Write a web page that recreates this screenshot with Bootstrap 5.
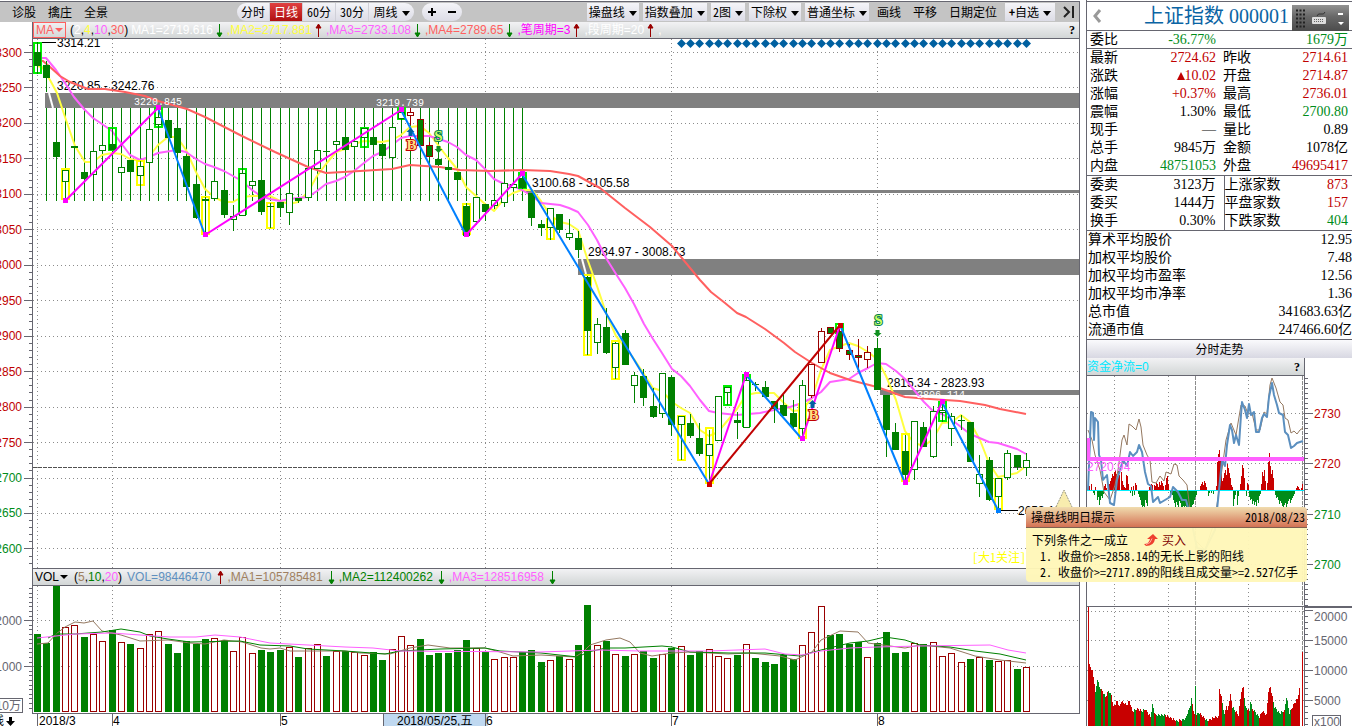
<!DOCTYPE html>
<html lang="zh-CN">
<head>
<meta charset="utf-8">
<meta name="viewport" content="width=device-width, initial-scale=1">
<title>上证指数 000001</title>
<link href="https://cdn.jsdelivr.net/npm/bootstrap@5.3.0/dist/css/bootstrap.min.css" rel="stylesheet">
<script src="https://cdn.jsdelivr.net/npm/bootstrap@5.3.0/dist/js/bootstrap.bundle.min.js"></script>
<style>
:root { --line:#666670; --up:#c00000; --down:#008c1a; }
body { font:12px/16px "Liberation Sans","Noto Sans CJK SC",sans-serif; color:#000; background:#fff; overflow:hidden; }
svg { display:block; width:100%; height:auto; }
svg text { font-size:12px; }
.main-pane { padding-right:6px; min-width:0; }
.toolbar { height:21px; background:#c4c4c4; border-top:1px solid var(--line); border-right:1px solid var(--line); margin-top:1px; font-family:"Noto Sans CJK SC",sans-serif; }
.toolbar a { color:#000; text-decoration:none; }
.toolbar .btn { font:inherit; color:#000; border:0; border-radius:0; padding:0 2px; height:18px; line-height:18px; white-space:nowrap; background:linear-gradient(#f4f4f8,#dcdce6); transition:none; }
.toolbar .dropdown-toggle::after { border-top:5px solid; border-right:4px solid transparent; border-left:4px solid transparent; margin-left:4px; vertical-align:1px; }
.half { font-family:"Noto Sans CJK SC",sans-serif; font-feature-settings:"hwid"; }
.pill { height:18px; border-radius:9px; overflow:hidden; background:linear-gradient(#f4f4f8,#dcdce6); }
.toolbar .pill .btn { background:none; border-right:1px solid #d0d0d8; width:33px; padding:0; }
.toolbar .pill .btn:last-child { border-right:0; }
.toolbar .pill .btn.wide { width:45px; }
.toolbar .pill .btn.step { width:20px; border:0; line-height:0; }
.pill .btn.step svg { width:10px; margin:auto; }
.toolbar .pill .btn.current { background:linear-gradient(#e04040,#b01010); color:#fff; }
.period { margin-left:129px; }
.indicator { height:17px; margin-left:32px; padding-right:4px; border:1px solid var(--line); border-width:0 1px 1px; background:linear-gradient(#f2f2f4,#d2d6d6); white-space:nowrap; overflow:hidden; }
.indicator.boxed { height:18px; border-top-width:1px; }
.indicator .series { margin-right:3px; }
.indicator.boxed .series { margin-right:5px; }
.tag-btn { font:inherit; background:none; border:0; padding:0 2px; line-height:14px; }
.tag-btn::after { content:""; display:inline-block; border:4px solid transparent; border-top:4px solid; border-bottom:0; margin-left:1px; vertical-align:2px; }
.tag-btn.red { color:#ff6060; border:1px solid #ff6060; padding:0 2px; }
.arrow { width:7px; height:15px; margin-right:4px; flex:none; }
.ask { font:bold 12px/14px "Liberation Serif",serif; background:none; border:0; padding:0; }
.side-pane { width:266px; flex:none; border-left:1px solid var(--line); position:relative; padding-top:1px; }
.quote-title { height:29px; border-top:1px solid var(--line); font:20px/28px "Liberation Serif","Noto Sans CJK SC",serif; color:#0a64a4; padding:0 63px 0 5px; }
.quote-title .btn { padding:0; border:0; width:11px; line-height:0; }
.quote { table-layout:fixed; width:100%; margin:0; font:14px/18px "Liberation Serif","Noto Sans CJK SC",serif; border-top:1px solid var(--line); --bs-table-bg:transparent; color:#000; }
.quote th, .quote td { padding:0 3px; border:0; font-weight:400; white-space:nowrap; height:18px; line-height:18px; color:#000; }
.quote td { text-align:right; padding-right:4px; }
.quote .up { color:var(--up); } .quote .down { color:var(--down); }
.quote.brief th, .quote.brief td { height:17px; line-height:17px; }
.quote.split th + td { padding-right:8px; }
.quote.split th + td:last-child { padding-right:4px; }
.quote.split td + th { border-left:1px solid var(--line); padding-left:0; }
.quote.wide-rows th { padding-left:1px; } .quote.wide-rows td { padding-right:0; }
.trend-title { height:19px; line-height:18px; border-top:1px solid var(--line); background:linear-gradient(#fafafc,#d8d8e2); text-align:center; font-family:"Noto Sans CJK SC",sans-serif; }
.flow { height:18px; width:218px; border:1px solid var(--line); border-width:0 1px 1px 0; background:linear-gradient(#f2f2f4,#d2d6d6); color:#00e8ff; padding-right:4px; }
.keypad { position:absolute; top:5px; right:3px; width:57px; height:26px; }
.hint { position:absolute; z-index:5; top:489px; right:45px; width:281px; }
.hint .tip-mark { width:18px; height:18px; margin-left:29px; }
.hint-head { height:21px; line-height:20px; padding:0 2px 0 5px; background:linear-gradient(#f0dcae,#d47254); border-bottom:1px solid #806050; border-radius:4px 4px 0 0; }
.hint-body { background:rgba(255,247,184,.96); border-radius:0 0 4px 4px; padding:4px 4px 0 6px; height:54px; }
.hint-body ol { margin:0; padding-left:26px; }
</style>
</head>
<body>
<div class="d-flex align-items-start">
  <main class="main-pane flex-grow-1">
    <nav class="toolbar d-flex align-items-center">
      <div class="d-flex gap-2">
        <a class="ms-2 ps-1" href="#">诊股</a><a class="ms-1" href="#">擒庄</a><a class="ms-1" href="#">全景</a>
      </div>
      <div class="pill period d-flex half">
        <button class="btn">分时</button><button class="btn current">日线</button><button class="btn">60分</button><button class="btn">30分</button><button class="btn wide dropdown-toggle">周线</button>
      </div>
      <div class="pill d-flex ms-2"><button class="btn step" aria-label="放大"><svg viewBox="0 0 10 10"><path d="M1 5h8M5 1v8" stroke="#000" stroke-width="2"/></svg></button><button class="btn step" aria-label="缩小"><svg viewBox="0 0 10 10"><path d="M1 5h8" stroke="#000" stroke-width="2"/></svg></button></div>
      <div class="d-flex align-items-center gap-1 ms-auto half">
        <button class="btn dropdown-toggle">操盘线</button>
        <button class="btn dropdown-toggle">指数叠加</button>
        <button class="btn dropdown-toggle">2图</button>
        <button class="btn dropdown-toggle">下除权</button>
        <button class="btn dropdown-toggle">普通坐标</button>
        <a class="px-1" href="#">画线</a><a class="px-1" href="#">平移</a><a class="px-1" href="#">日期定位</a>
        <button class="btn dropdown-toggle px-1"><b>+</b>自选</button>
        <a class="px-1" href="#" aria-label="展开"><svg viewBox="0 0 12 12" style="width:12px"><path d="M1 1l5 5-5 5M10 0v12" fill="none" stroke="#222" stroke-width="2"/></svg></a>
      </div>
    </nav>
    <div class="indicator d-flex align-items-center" id="maBar">
      <button class="tag-btn red me-1">MA</button>
      <span class="series">(<span style="color:#fff">2</span>,<span style="color:#ffff40">4</span>,<span style="color:#ff60ff">10</span>,<span style="color:#ff6060">30</span>)</span>
    </div>
    <svg id="price" viewBox="0 39 1080 529" role="img" aria-label="日线"></svg>
    <div class="indicator boxed d-flex align-items-center" id="volBar">
      <button class="tag-btn me-1">VOL</button>
      <span class="series">(<span style="color:#a08060">5</span>,<span style="color:#008000">10</span>,<span style="color:#ff60ff">20</span>)</span>
    </div>
    <svg id="volume" viewBox="0 586 1080 140" role="img" aria-label="成交量"></svg>
  </main>

  <aside class="side-pane">
    <div class="quote-title d-flex align-items-center justify-content-between">
      <button class="btn" aria-label="返回"><svg viewBox="0 0 11 14"><path d="M8 1L3 7l5 6" fill="none" stroke="#999" stroke-width="3"/></svg></button>
      <span>上证指数 000001</span>
    </div>
    <div class="keypad"><svg viewBox="0 0 57 26"><defs><linearGradient id="kp" x2="0" y2="1"><stop offset="0" stop-color="#929292"/><stop offset=".45" stop-color="#686868"/><stop offset="1" stop-color="#4c4c4c"/></linearGradient></defs><rect width="57" height="26" fill="url(#kp)"/><path d="M4 5.500h9M4 9.500h9M4 13.500h9M4 17.500h9M4 21.500h9" stroke="#222" stroke-dasharray="2 1.500" stroke-width="2"/><rect x="20" y="12" width="14" height="7" rx="1" fill="#ddd"/><path d="M22 14.500h10M22 16.500h10" stroke="#666" stroke-dasharray="1 1"/><path d="M25 11q1-3 4-2t4-2" fill="none" stroke="#333"/><path d="M46 8h5v2h-5zM46 17h6l-3 3z" fill="#fff"/></svg></div>
    <table class="table table-borderless quote brief">
      <tr><th style="width:48px">委比</th><td style="width:85px" class="down">-36.77%</td><td class="down">1679万</td></tr>
    </table>
    <table class="table table-borderless quote">
      <colgroup><col style="width:40px"><col style="width:93px"><col style="width:66px"><col></colgroup>
      <tbody id="q1"></tbody>
    </table>
    <table class="table table-borderless quote split">
      <colgroup><col style="width:40px"><col style="width:97px"><col style="width:66px"><col></colgroup>
      <tbody id="q2"></tbody>
    </table>
    <table class="table table-borderless quote wide-rows">
      <colgroup><col style="width:110px"><col></colgroup>
      <tbody id="q3"></tbody>
    </table>
    <div class="trend-title">分时走势</div>
    <div class="flow d-flex justify-content-between align-items-center"><span>资金净流=0</span><button class="ask">?</button></div>
    <svg id="intraday" viewBox="1087 376 265 350" role="img" aria-label="分时走势"></svg>
    <section class="hint half">
      <svg class="tip-mark" viewBox="0 0 18 18"><path d="M1 18L9 1l8 17" fill="#f8ecae" stroke="#998" stroke-dasharray="2 1"/></svg>
      <div class="hint-head d-flex justify-content-between"><span>操盘线明日提示</span><span>2018/08/23</span></div>
      <div class="hint-body">
        <div class="d-flex align-items-center">下列条件之一成立
          <svg viewBox="0 0 14 14" style="width:14px" class="ms-3 me-1"><path d="M0 11q5 0 6-5H3l6-5 5 5h-3q-1 7-9 7z" fill="#ee4030"/><path d="M2 11.500q5-1 6-6" fill="none" stroke="#ffb0a0"/></svg>
          <span style="color:#800000">买入</span></div>
        <ol><li>收盘价&gt;=2858.14的无长上影的阳线</li><li>收盘价&gt;=2717.89的阳线且成交量&gt;=2.527亿手</li></ol>
      </div>
    </section>
  </aside>
</div>

<script>
const GREEN = '#008000', RED = '#990000', LIME = '#00f000', YEL = '#ffff00', LINE = '#666670', GRID = '#8c8c8c';
const el = id => document.getElementById(id);
const X = i => Math.round(37 + 9.33 * i);
const rect = (x, y, w, h, fill, extra = '') => `<rect x="${x}" y="${y}" width="${w}" height="${h}" fill="${fill}" shape-rendering="crispEdges" ${extra}/>`;
const seg = (x1, y1, x2, y2, c, extra = '') => `<path d="M${x1} ${y1}L${x2} ${y2}" stroke="${c}" fill="none" ${extra}/>`;
const hair = (x1, y1, x2, y2, c, dash) => seg(x1, y1, x2, y2, c, 'shape-rendering="crispEdges"' + (dash ? ` stroke-dasharray="${dash}"` : ''));
const poly = (s, c, w) => `<polyline points="${s}" fill="none" stroke="${c}" stroke-width="${w}" stroke-linejoin="round"/>`;
const txt = (x, y, s, c = '#000', extra = '') => `<text x="${x}" y="${y}" fill="${c}" ${extra}>${s}</text>`;
const months = [[0, '2018/3'], [8, '4'], [26, '5'], [48, '6'], [68, '7'], [90, '8']];

/* indicator bars */
const arrow = d => `<svg class="arrow" viewBox="0 0 7 15"><path d="${d > 0 ? 'M3.500 14V2M1 5l2.500-4L6 5z' : 'M3.500 1v12M1 10l2.500 4L6 10z'}" stroke="${d > 0 ? '#900' : GREEN}" fill="${d > 0 ? '#900' : GREEN}"/></svg>`;
const series = (bar, list) => el(bar).insertAdjacentHTML('beforeend', list.map(([t, c, d]) => `<span class="series" style="color:${c}">${t}</span>${d ? arrow(d) : ''}`).join(''));
series('maBar', [['MA1=2719.616', '#fff', -1], [',MA2=2717.881', '#ffff40', 1], [',MA3=2733.108', '#ff60ff', -1], [',MA4=2789.65', '#ff6060', -1], [',笔周期=3', '#f0f', 1], [',段周期=20', '#fff', 1], [',', '#fff', 0]]);
el('maBar').insertAdjacentHTML('beforeend', '<button class="ask ms-auto">?</button>');
series('volBar', [['VOL=98446470', '#6090c0', 1], [',MA1=105785481', '#a08060', -1], [',MA2=112400262', GREEN, -1], [',MA3=128516958', '#ff60ff', -1]]);

/* daily candles: kind, body top, body bottom, wick top, wick bottom, optional box [colour, top, bottom]
   f filled, h hollow, r hollow red, b filled with red outline */
const candles = [
['f',52,66,42,74,'L',42,74],['f',65,78,61,92],['f',142,157],['h',170,181,170,200,'Y',168,200],['f',146,148],['f',172,179,172,181],['h',151,174],['h',145,150],['f',144,150,128,150,'L',127,151],['h',167,172],
['f',160,172],['h',166,175,161,186,'Y',160,186],['h',129,162],['h',117,124,108,128,'L',107,128],['f',120,138],['f',128,153],['f',156,187],['f',184,218,184,219],['f',199,201,197,235,'Y',196,235],['h',181,198],
['f',190,215,190,218],['h',216,219,205,231],['h',173,215,168,215,'L',168,215],['h',181,185],['f',180,212,180,215],['f',206,207,203,228,'Y',202,229],['f',202,208,202,217],['h',193,212,193,225],['f',198,201,198,203],['h',168,197],
['h',150,168],['f',151,152],['h',141,144],['f',137,150],['h',141,146],['h',128,137,128,148,'L',127,148],['f',137,145],['f',144,156],['h',127,157],['h',112,118,108,120,'L',107,120],
['r',112,115,108,125],['b',119,145],['b',145,156,142,156],['f',159,165],['f',167,170],['f',172,180],['f',206,236,203,236,'Y',203,235],['h',197,221,197,225],['f',204,212,204,221],['h',200,205,200,209],
['h',183,202,183,207],['h',184,187],['f',178,188,172,189,'L',172,189],['f',193,218,193,226],['f',224,228,220,236],['h',208,227,208,240,'Y',218,240],['f',214,230,214,233],['h',233,237,219,240],['f',238,250,231,258],['f',277,331,276,355,'Y',274,356],
['h',324,342,318,354],['f',327,353,308,354],['h',343,367,342,379,'Y',340,380],['f',333,365,330,365],['h',375,385,372,403],['f',376,398,369,406],['f',406,417,388,418],['h',373,413,373,418],['f',377,425,375,436],['h',416,424,416,460,'Y',415,461],
['f',423,436,414,438],['f',438,454,423,456],['h',444,455,430,482,'Y',427,484],['h',396,440],['h',387,392,387,405,'L',385,406],['f',420,423,412,439],['h',380,427,376,427,'L',374,427],['f',384,385,382,391],['f',387,397,381,398],['f',401,409,401,423],
['f',405,416,394,416],['f',413,427,400,430],['h',385,428,380,439,'Y',403,439],['r',364,395,364,398],['r',331,362,328,362],['b',327,333],['b',331,348,325,352,'L',323,334],['b',350,354,344,360],['b',355,357,339,370],['r',352,359,346,368],
['f',348,390,338,390],['f',395,430,395,457],['f',432,450,423,450],['f',451,475,435,482,'Y',433,482],['h',421,469,421,480],['f',427,447,422,447],['h',411,456,406,458],['h',410,412,402,422,'L',401,422],['h',416,428,413,446],['f',420,421,415,430],
['f',422,462],['h',474,483,455,497],['f',460,500,457,501],['h',478,496,478,510,'Y',478,510],['h',453,477,450,480],['f',455,467,455,470],['h',460,467,453,476]];

let p = '';
for (let k = 0; k < 15; k++) {
  const y = Math.round(52 + k * 35.46) + .5;
  p += hair(33, y, 1079, y, GRID, '1 3');
}
months.forEach(([i]) => p += hair(X(i) + .5, 39, X(i) + .5, 568, GRID, '1 3'));
[[45, 93, 15], [526, 190, 3], [578, 259, 16], [880, 390, 5]].forEach(([x, y, h]) => p += rect(x, y, 1080 - x, h, '#808080'));
p += seg(49, 93, 53, 108, '#fff', 'stroke-width="2"') + seg(582, 259, 586, 274, '#fff', 'stroke-width="2"');
for (let i = 1; i <= 52; i++) p += hair(X(i) + .5, 108, X(i) + .5, 201, GREEN);
p += hair(33, 467.5, 1079, 467.5, '#505050', '4 1');
p += txt(57, 47, '3314.21') + hair(37, 42.5, 56, 42.5, '#000') + txt(57, 90, '3220.85 - 3242.76') + txt(532, 187, '3100.68 - 3105.58') + txt(588, 256, '2934.97 - 3008.73') + txt(887, 387, '2815.34 - 2823.93') + txt(1018, 515, '2653.11') + hair(998, 510.5, 1018, 510.5, '#000');
p += poly('37,66 42,67 50,80 57,93 65,117 75,146 85,162 93,162 102,155 112,153 121,154 130,159 140,161 149,157 158,145 168,137 177,137 186,150 196,172 205,189 214,197 224,202 233,202 242,197 252,196 270,196 280,201 289,204 298,202 308,192 317,176 326,164 336,152 345,149 354,144 364,141 382,142 392,140 401,135 410,127 420,126 429,133 438,145 448,158 457,169 466,187 476,196 485,204 494,211 504,199 513,193 522,190 532,190 541,201 550,215 560,222 569,224 578,230 588,261 597,286 606,313 616,336 625,347 634,359 644,374 653,388 662,391 672,402 681,408 690,413 700,430 709,436 718,432 728,420 737,409 746,395 756,393 774,393 784,403 793,411 802,410 812,398 821,370 830,350 840,346 849,343 858,346 868,352 877,359 886,376 896,400 905,431 914,443 924,446 933,439 942,423 952,422 961,415 970,422 980,440 989,463 998,477 1008,475 1017,473 1026,466', '#ffff40', 2);
p += poly('37,58 46,58 56,70 65,83 74,97 84,109 93,118 102,124 112,131 121,143 130,155 140,160 149,157 158,153 177,150 186,152 196,159 205,164 214,167 224,171 233,176 242,181 252,190 261,196 270,199 280,201 289,199 308,197 317,191 326,184 336,181 345,177 354,171 364,163 373,156 382,152 392,145 401,138 410,136 429,136 448,142 457,147 466,155 476,160 485,169 494,179 504,184 513,186 522,190 532,196 541,203 560,205 569,208 578,212 588,225 597,240 606,258 616,274 625,288 634,304 644,324 653,339 662,353 672,369 681,376 690,386 700,400 709,411 718,413 737,415 760,413 774,410 790,407 802,403 812,398 821,392 830,382 849,379 858,373 868,368 877,363 886,364 896,371 905,379 914,390 924,402 933,411 942,414 952,420 961,427 970,434 989,442 998,443 1017,449 1026,454', '#ff60ff', 2);
p += poly('37,60 43,61 50,67 60,76 70,82 88,89 105,89 125,92 145,96 158,101 187,109 205,117 240,135 275,152 308,167 326,173 360,171 392,169 410,165 440,167 460,170 490,171 522,170 550,171 569,174 578,176 600,188 625,208 650,227 672,246 700,280 711,292 725,303 737,313 746,317 765,329 784,343 795,352 812,363 830,373 850,380 877,387 905,397 930,399 960,401 985,405 1000,409 1026,414', '#ff6060', 2);
candles.forEach(([k, t, b, wt, wb, box, bt, bb], i) => {
  const x = X(i), c = k === 'r' || k === 'b' ? RED : GREEN;
  if (wt) p += rect(x, wt, 1, wb - wt, c);
  if (box) p += rect(x - 3, bt + 1, 7, bb - bt - 2, 'none', `stroke="${box === 'L' ? LIME : YEL}" stroke-width="2"`) + rect(x, wt, 1, wb - wt, c);
  if (k === 'f') p += rect(x - 3, t, 7, b - t, GREEN);
  else p += rect(x - 2.500, t + .5, 6, b - t, k === 'b' ? GREEN : '#fff', `stroke="${c}"`);
});
/* pivots and the swing lines between them */
const swing = (c, a) => a.forEach(([x1, y1, x2, y2]) => p += seg(x1, y1, x2, y2, c, 'stroke-width="2"'));
swing('#ff00ff', [[65,201,158,108],[205,235,401,110],[466,235,522,174],[709,484,746,375],[802,439,840,325],[905,483,942,402]]);
swing('#0080ff', [[158,108,205,235],[401,110,466,235],[522,174,709,484],[746,375,802,439],[840,325,905,483],[942,402,998,510]]);
swing('#c00000', [[709,484,840,325]]);
[[65,201],[158,108],[205,235],[401,110],[466,235],[522,174],[746,375],[802,439],[905,483],[942,402]].forEach(([x, y]) => p += rect(x - 2, y - 3, 5, 5, '#ff00ff'));
[[709,484],[840,325]].forEach(([x, y]) => p += rect(x - 2, y - 2, 5, 5, '#d00000'));
p += rect(996, 508, 5, 5, '#0080ff');
for (let i = 69; i < 107; i++) p += `<path d="M${X(i) - 4} 43.500l4.500-4.500 4.500 4.500-4.500 4.500z" fill="#0060a0"/>`;
const mono = 'style="font-size:10px;font-family:\'Liberation Mono\',monospace"';
p += txt(134, 105, '3220.845', '#fff', mono) + txt(376, 106, '3219.739', '#fff', mono) + txt(917, 398, '2806.114', '#fff', mono);
const mark = (x, y, s, f, c) => txt(x + .5, y + 5, s, f, `text-anchor="middle" style="font:bold 15px 'Liberation Serif',serif" stroke="${c}" stroke-width="2" paint-order="stroke"`);
p += mark(411, 145, 'B', '#ffe080', '#c00000') + mark(813, 415, 'B', '#ffe080', '#c00000') + mark(438, 136, 'S', '#d0ff60', '#008050') + mark(878, 320, 'S', '#d0ff60', '#008050');
[[410, 128], [812, 400]].forEach(([x, y]) => p += `<path d="M${x + .5} ${y}l4 4h-2v4h-4v-4h-2z" fill="#0060a0"/>`);
[[438, 153], [877, 337]].forEach(([x, y]) => p += `<path d="M${x + .5} ${y}l4-4h-2v-3h-4v3h-2z" fill="#109020"/>`);
p += txt(972, 562, '[大1关注]', '#ffff00', 'class="half"');
/* price axis */
p += rect(32, 39, 1, 529, LINE) + rect(1079, 39, 1, 529, LINE);
for (let k = -1; k < 73; k++) { const y = Math.round(52 + k * 7.092); p += rect(k % 5 ? 29 : 24, y, k % 5 ? 3 : 8, 1, LINE); }
for (let k = 0; k < 15; k++) p += txt(22, Math.round(56.5 + k * 35.46), 3300 - 50 * k, k < 12 ? '#c00000' : '#008c1a', 'text-anchor="end"');
el('price').innerHTML = p;

/* daily volume: bar tops, capital F marks a falling day */
const vols = 'F634 F643 F585 627 625 F637 634 641 F630 642 F644 648 634 631 F644 F653 F641 F644 F639 638 F640 651 637 653 F650 F652 F650 647 F657 648 644 F656 651 F651 652 655 F652 F660 649 636 645 F639 F655 F653 F653 F650 F640 648 F652 659 657 657 F652 F650 F662 660 F656 659 F645 F605 645 F641 654 F656 654 F651 F658 654 F648 646 F655 F651 649 656 658 F655 644 F658 F662 F664 F655 F659 645 632 606 F635 F634 F644 F642 657 F643 F632 F653 F652 643 F644 642 656 653 662 F659 657 F660 661 660 F669 667'.split(' ');
let v = '';
[620.5, 666.5].forEach(y => v += hair(33, y, 1079, y, GRID, '1 3'));
months.forEach(([i]) => v += hair(X(i) + .5, 586, X(i) + .5, 713, GRID, '1 3'));
vols.forEach((s, i) => {
  const fall = s[0] === 'F', t = +s.replace('F', '');
  v += fall ? rect(X(i) - 3, t, 7, 712 - t, GREEN) : rect(X(i) - 2.500, t + .5, 6, 711 - t, '#fff', `stroke="${RED}"`);
});
v += poly('37,644 48,643 56,634 65,627 75,622 84,623 93,621 102,631 121,635 140,641 168,640 190,643 205,644 224,640 242,642 261,648 270,649 280,648 290,651 345,651 360,653 390,654 400,651 410,648 428,645 450,648 485,648 500,652 513,656 541,655 575,657 583,652 590,645 606,640 620,638 630,642 640,653 652,656 672,653 690,652 728,654 750,653 780,656 795,660 812,652 821,640 840,631 858,632 868,643 905,648 920,645 950,648 975,656 1000,660 1026,663', '#947860', 1);
v += poly('48,638 56,634 75,634 102,632 121,629 140,632 150,636 168,639 190,642 240,641 260,645 290,646 308,649 345,651 385,654 400,651 440,649 485,648 500,651 541,653 578,657 588,652 606,648 625,648 662,646 672,647 690,652 730,653 765,653 800,656 821,650 850,643 868,641 885,637 905,640 920,645 950,647 975,651 1000,654 1026,660', GREEN, 1);
v += poly('37,638 56,636 75,634 112,633 140,635 170,637 196,637 215,635 240,637 270,643 308,645 345,647 373,648 400,651 540,652 600,650 640,651 709,651 765,649 785,654 802,655 821,651 850,648 877,647 920,646 990,645 1008,650 1026,653', '#ff60ff', 1);
v += rect(32, 586, 1, 127, LINE) + rect(1079, 586, 1, 127, LINE) + rect(32, 713, 1048, 1, LINE);
for (let y = 588, k = 0; y < 712; y += 4.6, k++) v += rect((Math.round((y - 620.4) / 4.6) % 10) ? 29 : 24, Math.round(y), (Math.round((y - 620.4) / 4.6) % 10) ? 3 : 8, 1, LINE);
v += txt(22, 625, '2000', '#666670', 'text-anchor="end"') + txt(22, 671, '1000', '#666670', 'text-anchor="end"');
v += rect(-5.5, 698.5, 28, 14, '#fff', `stroke="${LINE}"`) + txt(21, 710, 'X10万', '#666670', 'text-anchor="end"');
v += txt(-20, 725, '日线') + '<path d="M9 717h3v4h3l-4.500 5-4.500-5h3z"/>';
v += rect(383, 714, 105, 12, '#bfd8f0') + rect(383, 714, 1, 12, LINE) + txt(397, 725, '2018/05/25,五');
months.forEach(([i, m]) => v += rect(X(i), 713, 1, 13, LINE) + txt(X(i) + (i ? 1 : 2), 725, m));
el('volume').innerHTML = v;

/* quote tables */
const row = r => '<tr>' + r.map((c, i) => i % 2 ? `<td class="${c[1] || ''}">${c[0]}</td>` : `<th scope="row">${c[0]}</th>`).join('') + '</tr>';
el('q1').innerHTML = [
[['最新'],['2724.62','up'],['昨收'],['2714.61','up']],
[['涨跌'],['<svg viewBox="0 0 8 8" class="d-inline-block align-baseline" style="width:8px"><path d="M4 0l4 8H0z" fill="#c00000"/></svg>10.02','up'],['开盘'],['2714.87','up']],
[['涨幅'],['+0.37%','up'],['最高'],['2736.01','up']],
[['震幅'],['1.30%'],['最低'],['2700.80','down']],
[['现手'],['—'],['量比'],['0.89']],
[['总手'],['9845万'],['金额'],['1078亿']],
[['内盘'],['48751053','down'],['外盘'],['49695417','up']]].map(row).join('');
el('q2').innerHTML = [
[['委卖'],['3123万'],['上涨家数'],['873','up']],
[['委买'],['1444万'],['平盘家数'],['157','up']],
[['换手'],['0.30%'],['下跌家数'],['404','down']]].map(row).join('');
el('q3').innerHTML = [[['算术平均股价'],['12.95']],[['加权平均股价'],['7.48']],[['加权平均市盈率'],['12.56']],[['加权平均市净率'],['1.36']],[['总市值'],['341683.63亿']],[['流通市值'],['247466.60亿']]].map(row).join('');

/* intraday chart */
let t = '';
[413, 463, 514, 564, 611, 640, 670, 700].forEach(y => t += hair(1087, y + .5, 1304, y + .5, GRID, '1 3'));
[1114, 1168, 1248].forEach(x => t += hair(x + .5, 376, x + .5, 726, GRID, '1 3'));
[1195, 1302].forEach(x => t += hair(x + .5, 376, x + .5, 726, GRID, '4 1'));
/* net flow bars: start x, heights per pixel */
const flow = [[1088,'8 4 0 6'],[1093,'-2 -4 3 0 -9 -6 -14 -9 -5 -7 -3 4 6 2'],[1107,'0 3 6 9 12 16 14 18 20 16 14 19 15 0 18 9 5 3'],[1125,'2 15 14 6 0 -2 3 -5 4 -4 7 5 0 -3 -6'],[1140,'-9 -14 -16 -15 -17 -9 -12 -15 0 3 4 6 5 0'],[1154,'5 4 7 6 3 8 5 9 7 4 0 5 12 14 6'],[1169,'0 -3 0 -4 -9 -12 -16 -11 -14 -16 -10 -12 -16 -17 -15 -16 -15 -16 -17 -16 -15 -16 -16 -14 -13 -9 -6 -4'],[1200,'4 6 8 5 9 7 3 0 -5 -2 0 -2 0 -3 0'],[1216,'4 28 36 40 32 22 9 12 17 20 15 26 22 17 12 5 3'],[1233,'-15 -8 -4 0 -14 -5 0 6 14 25 22 12 0 -5 7 5'],[1249,'-6 -9 -8 -13 -10 -14 -11 -15 -9 -12 -5 -3 6 18'],[1263,'14 20 9 0 7 28 37 24 16 20 12 0 -4 -7'],[1277,'-6 -9 -13 -10 -12 -15 -16 -14 -12 -16 -13 -10 -8 -12 -9 -7 -5 -3 0 2 4 3 1 0 2 6']];
flow.forEach(([x, s]) => s.split(' ').forEach((h, i) => { h = +h; if (h) t += rect(x + i, h > 0 ? 490 - h : 491, 1, Math.abs(h), h > 0 ? '#c80000' : '#008c1a'); }));
t += rect(1087, 490, 217, 1, '#00f0ff');
t += poly('1088,430 1092,440 1095,455 1100,470 1104,492 1110,500 1115,485 1118,470 1122,440 1124,435 1127,445 1129,424 1132,426 1136,430 1139,419 1141,427 1143,445 1147,455 1150,460 1152,482 1156,483 1160,476 1164,481 1166,472 1171,474 1174,464 1177,465 1179,476 1183,480 1187,485 1190,510 1195,540 1205,550 1215,520 1219,490 1223,462 1226,440 1231,423 1236,435 1241,405 1245,406 1248,414 1252,413 1256,430 1260,430 1264,412 1267,414 1270,385 1272,378 1276,388 1280,402 1283,405 1285,418 1288,420 1291,433 1294,431 1297,434 1300,430 1303,428', '#947860', 1);
t += poly('1088,490 1090,440 1091,412 1093,413 1094,440 1095,418 1098,422 1099,455 1101,460 1103,480 1107,475 1110,503 1114,505 1117,480 1120,470 1123,460 1127,466 1130,452 1133,456 1137,452 1139,445 1142,452 1145,472 1148,484 1151,486 1153,502 1158,497 1160,503 1165,500 1170,497 1173,487 1178,492 1182,500 1186,500 1190,515 1197,548 1205,550 1215,530 1218,500 1222,460 1225,466 1227,445 1230,425 1232,430 1234,443 1236,435 1239,445 1241,415 1242,402 1245,410 1247,418 1249,404 1251,415 1254,412 1256,432 1259,432 1262,418 1264,414 1267,417 1269,397 1272,383 1274,395 1277,405 1279,413 1283,415 1285,432 1288,435 1291,448 1294,446 1297,443 1303,441', '#5b8fbf', 2);
t += rect(1087, 457, 218, 4, '#ff60ff') + rect(1087, 438, 3, 22, '#ff60ff') + txt(1087, 471, '2720.94', '#ff60ff');
/* intraday volume: heights between the listed turning points */
const env = [[1089,62],[1092,56],[1094,44],[1095,34],[1097,48],[1099,40],[1102,36],[1105,30],[1108,36],[1111,32],[1113,20],[1117,26],[1119,20],[1121,26],[1126,22],[1129,26],[1132,16],[1137,18],[1142,16],[1145,18],[1150,10],[1152,22],[1155,12],[1165,12],[1172,8],[1176,6],[1185,8],[1190,22],[1191,28],[1194,12],[1199,14],[1207,6],[1214,10],[1218,10],[1219,38],[1221,30],[1224,12],[1226,22],[1227,16],[1230,32],[1232,20],[1238,12],[1241,36],[1243,40],[1245,20],[1249,16],[1250,26],[1252,18],[1259,10],[1262,16],[1266,12],[1268,36],[1270,40],[1274,20],[1279,14],[1284,16],[1286,30],[1289,14],[1293,22],[1297,28],[1299,38],[1300,42]];
const greens = [[1095,1101],[1103,1105],[1108,1111],[1134,1136],[1141,1144],[1151,1154],[1156,1165],[1176,1179],[1182,1192],[1197,1200],[1205,1208],[1222,1225],[1232,1235],[1244,1247],[1249,1252],[1254,1259],[1273,1283],[1285,1291]];
let e = 0;
for (let x = 1089; x < 1300; x++) {
  while (env[e + 1][0] < x) e++;
  const [a, ha] = env[e], [b, hb] = env[e + 1];
  const h = Math.round(ha + (hb - ha) * (x - a) / (b - a)) - (x * 7 % 3);
  t += rect(x, 726 - h, 1, h, greens.some(g => x >= g[0] && x < g[1]) ? '#008c1a' : '#c80000');
}
t += rect(1088, 607, 1, 119, '#c80000') + rect(1302, 652, 1, 74, '#c80000') + rect(1195, 686, 1, 40, '#008c1a');
t += rect(1087, 606, 218, 1, LINE) + rect(1304, 606, 48, 2, LINE) + rect(1304, 376, 1, 350, LINE);
for (let k = -7; k < 39; k++) { const y = Math.round(413 + k * 5.04); t += rect(1305, y, k % 10 ? 3 : 8, 1, LINE); }
[[2730, 413], [2720, 463], [2710, 514], [2700, 564]].forEach(([s, y]) => t += txt(1314, y + 5, s, s > 2715 ? '#c00000' : '#008c1a'));
for (let y = 610; y < 726; y += 6) t += rect(1305, y, y % 30 === 10 ? 8 : 3, 1, LINE);
[[20000, 616], [15000, 640], [10000, 670], [5000, 700]].forEach(([s, y]) => t += txt(1314, y + 5, s, '#666670'));
t += rect(1312.5, 715.5, 28, 14, '#fff', `stroke="${LINE}"`) + txt(1314, 726, 'x100', '#666670');
el('intraday').innerHTML = t;
</script>
</body>
</html>
